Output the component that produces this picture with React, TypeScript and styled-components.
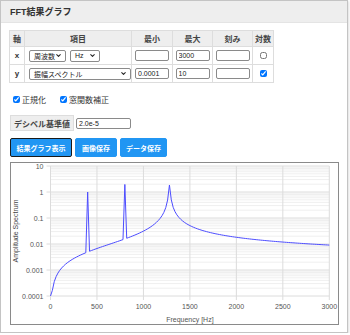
import React from 'react'
import styled, { createGlobalStyle } from 'styled-components'
import { ChevronDown } from 'lucide-react'

const GlobalStyle = createGlobalStyle`
  body {
    margin: 0;
    background: #fff;
    color: #333;
    font-family: "Liberation Sans", "Noto Sans CJK JP", sans-serif;
  }
`

const Panel = styled.section`
  width: 348px;
  height: 333px;
  box-sizing: border-box;
  border: 1px solid #c4c4c4;
  box-shadow: 1px 1px 2px rgba(0, 0, 0, 0.12);
  display: flex;
  flex-direction: column;
`

const Header = styled.header`
  height: 21px;
  background: #eee;
  border-bottom: 1px solid #e4e4e4;
  display: flex;
  align-items: center;
  padding-left: 9px;
  font-size: 9px;
  font-weight: bold;
  color: #333;
`

const Body = styled.div`
  padding: 7px 9px 0 9px;
  display: flex;
  flex-direction: column;
  align-items: flex-start;
`

const AxisTable = styled.table`
  margin-left: -1px;
  width: 264px;
  table-layout: fixed;
  border-collapse: collapse;
  font-size: 8px;

  th,
  td {
    border: 1px solid #ddd;
    padding: 0;
  }
`

const HeadRow = styled.tr`
  height: 16px;
  background: #eee;

  th {
    font-weight: bold;
    color: #444;
    text-align: center;
  }
`

const DataRow = styled.tr`
  height: 18px;
`

const AxisCell = styled.td`
  text-align: center;
  font-weight: bold;
  color: #333;
`

const ItemCell = styled.td`
  padding-left: 2px !important;
`

const ItemInner = styled.div`
  display: flex;
  gap: 4px;
  padding-left: 2px;
`

const CenterCell = styled.td`
  text-align: center;
  line-height: 0;
`

const SelectBox = styled.div<{ w: number }>`
  width: ${p => p.w}px;
  height: 12px;
  box-sizing: border-box;
  border: 1px solid #8a8a8a;
  border-radius: 2px;
  display: flex;
  align-items: center;
  justify-content: space-between;
  padding: 0 3px 0 4px;
  font-size: 7px;
  color: #222;
  background: #fff;
`

const NumInput = styled.input<{ w?: number }>`
  width: ${p => p.w ?? 34}px;
  height: 11px;
  box-sizing: border-box;
  border: 1px solid #8a8a8a;
  border-radius: 2px;
  padding: 0 2px;
  font-size: 7px;
  font-family: "Liberation Sans", sans-serif;
  color: #222;
  margin: 0;
  vertical-align: middle;
`

const Check = styled.input`
  width: 7px;
  height: 7px;
  margin: 0;
  vertical-align: middle;
`

const CheckRow = styled.div`
  margin-top: 10px;
  height: 12px;
  display: flex;
  align-items: center;
  gap: 14px;
  padding-left: 3px;
`

const CheckLabel = styled.label`
  display: inline-flex;
  align-items: center;
  gap: 2px;
  font-size: 8px;
  color: #333;
`

const DbRow = styled.div`
  margin-top: 10px;
  display: flex;
  align-items: center;
  gap: 2px;
`

const DbLabel = styled.div`
  height: 16px;
  box-sizing: border-box;
  background: #eee;
  border: 1px solid #ddd;
  padding: 0 3px;
  display: flex;
  align-items: center;
  font-size: 8px;
  font-weight: bold;
  color: #444;
`

const ButtonRow = styled.div`
  margin-top: 7px;
  display: flex;
  gap: 3px;
`

const ActionButton = styled.button<{ w: number; focused?: boolean }>`
  width: ${p => p.w}px;
  height: 19px;
  box-sizing: border-box;
  background: #2196f3;
  color: #fff;
  border: ${p => (p.focused ? '1.5px solid #1a1a1a' : '1px solid #2196f3')};
  border-radius: 2px;
  font-size: 7px;
  font-weight: bold;
  font-family: "Liberation Sans", "Noto Sans CJK JP", sans-serif;
  padding: 0;
`

const ChartBox = styled.div`
  margin-top: 5px;
  width: 329px;
  height: 163px;
  box-sizing: border-box;
  border: 1px solid #8a8a8a;
  background: #fff;
`

const W = 327
const H = 161
const PL = 39.5
const PR = 318.3
const PT = 3
const DEC = 26

const fx = (f: number) => PL + (f / 3000) * (PR - PL)
const fy = (a: number) => PT + (1 - Math.log10(a)) * DEC

function spectrum(): string {
  const pts: string[] = []
  const f0 = 1280
  const c = 0.016
  const z = 0.0043
  for (let f = 0; f <= 3000; f += 20) {
    const r = f / f0
    let a = (c * Math.pow(r, 1.1)) / Math.sqrt((1 - r * r) ** 2 + (2 * z * r) ** 2)
    if (f === 400) a = 1.0
    if (f === 800) a = 1.95
    a = Math.min(10, Math.max(1e-4, a))
    pts.push(`${fx(f).toFixed(2)},${fy(a).toFixed(2)}`)
  }
  return pts.join(' ')
}

const yLabels = ['10', '1', '0.1', '0.01', '0.001', '0.0001']
const xLabels = [0, 500, 1000, 1500, 2000, 2500, 3000]

function Chart() {
  const minor: number[] = []
  for (let i = 0; i < 5; i++) {
    for (let k = 2; k <= 9; k++) minor.push(PT + DEC * (i + 1) - DEC * Math.log10(k))
  }
  const bottom = PT + DEC * 5
  return (
    <svg width={W} height={H} style={{ display: 'block' }}>
      {minor.map((y, i) => (
        <line key={'m' + i} x1={PL} x2={PR} y1={y} y2={y} stroke="#efefef" strokeWidth={1} />
      ))}
      {yLabels.map((l, i) => (
        <g key={l}>
          <line x1={PL - 4} x2={PR} y1={PT + DEC * i} y2={PT + DEC * i} stroke="#dcdcdc" strokeWidth={1} />
          <text x={PL - 7} y={PT + DEC * i + 2.5} fontSize={7} fill="#555" textAnchor="end" fontFamily="Liberation Sans, sans-serif">
            {l}
          </text>
        </g>
      ))}
      {xLabels.map(f => (
        <g key={f}>
          <line x1={fx(f)} x2={fx(f)} y1={PT} y2={bottom + 4} stroke="#dcdcdc" strokeWidth={1} />
          <text x={fx(f)} y={bottom + 13} fontSize={7} fill="#555" textAnchor="middle" fontFamily="Liberation Sans, sans-serif">
            {f}
          </text>
        </g>
      ))}
      <polyline points={spectrum()} fill="none" stroke="#4d4dff" strokeWidth={1} strokeLinejoin="round" />
      <text x={(PL + PR) / 2} y={H - 2} fontSize={7} fill="#555" textAnchor="middle" fontFamily="Liberation Sans, sans-serif">
        Frequency [Hz]
      </text>
      <text
        transform={`translate(7, ${(PT + bottom) / 2}) rotate(-90)`}
        fontSize={7}
        fill="#444"
        textAnchor="middle"
        fontFamily="Liberation Sans, sans-serif"
      >
        Amplitude Spectrum
      </text>
    </svg>
  )
}

function Select({ w, label }: { w: number; label: string }) {
  return (
    <SelectBox w={w}>
      <span>{label}</span>
      <ChevronDown size={7} strokeWidth={3.5} color="#222" />
    </SelectBox>
  )
}

export default function App() {
  return (
    <>
      <GlobalStyle />
      <Panel>
        <Header>FFT結果グラフ</Header>
        <Body>
          <AxisTable>
            <colgroup>
              <col style={{ width: 15 }} />
              <col style={{ width: 107 }} />
              <col style={{ width: 41 }} />
              <col style={{ width: 40 }} />
              <col style={{ width: 40 }} />
              <col style={{ width: 21 }} />
            </colgroup>
            <thead>
              <HeadRow>
                <th>軸</th>
                <th>項目</th>
                <th>最小</th>
                <th>最大</th>
                <th>刻み</th>
                <th>対数</th>
              </HeadRow>
            </thead>
            <tbody>
              <DataRow>
                <AxisCell>x</AxisCell>
                <ItemCell>
                  <ItemInner>
                    <Select w={37} label="周波数" />
                    <Select w={30} label="Hz" />
                  </ItemInner>
                </ItemCell>
                <CenterCell>
                  <NumInput defaultValue="" />
                </CenterCell>
                <CenterCell>
                  <NumInput defaultValue="3000" />
                </CenterCell>
                <CenterCell>
                  <NumInput defaultValue="" />
                </CenterCell>
                <CenterCell>
                  <Check type="checkbox" />
                </CenterCell>
              </DataRow>
              <DataRow>
                <AxisCell>y</AxisCell>
                <ItemCell>
                  <ItemInner>
                    <Select w={102} label="振幅スペクトル" />
                  </ItemInner>
                </ItemCell>
                <CenterCell>
                  <NumInput defaultValue="0.0001" />
                </CenterCell>
                <CenterCell>
                  <NumInput defaultValue="10" />
                </CenterCell>
                <CenterCell>
                  <NumInput defaultValue="" />
                </CenterCell>
                <CenterCell>
                  <Check type="checkbox" defaultChecked />
                </CenterCell>
              </DataRow>
            </tbody>
          </AxisTable>

          <CheckRow>
            <CheckLabel>
              <Check type="checkbox" defaultChecked />
              正規化
            </CheckLabel>
            <CheckLabel>
              <Check type="checkbox" defaultChecked />
              窓関数補正
            </CheckLabel>
          </CheckRow>

          <DbRow>
            <DbLabel>デシベル基準値</DbLabel>
            <NumInput w={55} defaultValue="2.0e-5" />
          </DbRow>

          <ButtonRow>
            <ActionButton w={62} focused>
              結果グラフ表示
            </ActionButton>
            <ActionButton w={42}>画像保存</ActionButton>
            <ActionButton w={47}>データ保存</ActionButton>
          </ButtonRow>

          <ChartBox>
            <Chart />
          </ChartBox>
        </Body>
      </Panel>
    </>
  )
}
